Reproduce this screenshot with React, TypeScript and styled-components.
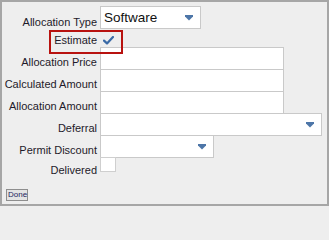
import styled, { createGlobalStyle } from 'styled-components';

const GlobalStyle = createGlobalStyle`
  html, body {
    margin: 0;
    padding: 0;
    background: #eeeeee;
  }
  body {
    font-family: 'Liberation Sans', Arial, sans-serif;
  }
`;

const Panel = styled.div`
  box-sizing: border-box;
  width: 329px;
  height: 206px;
  border: 2px solid #a6a6a6;
  background: #eeeeee;
  padding-top: 4px;
  display: flex;
  flex-direction: column;
`;

const Form = styled.div`
  position: relative;
  display: grid;
  grid-template-columns: 95px 1fr;
  grid-template-rows: 23px 18px 22px 22px 22px 22px 22px 20px;
  column-gap: 3px;
`;

const Label = styled.label`
  align-self: end;
  text-align: right;
  font-size: 11px;
  line-height: 13px;
  color: #1e1a2a;
  white-space: nowrap;
`;

const SelectBox = styled.div<{ $width: number; $big?: boolean }>`
  box-sizing: border-box;
  width: ${p => p.$width}px;
  height: 23px;
  background: #fff;
  border: 1px solid #c9c9c9;
  display: flex;
  align-items: center;
  justify-content: space-between;
  padding: 0 7px 0 3px;
  font-size: ${p => (p.$big ? '13.5px' : '11px')};
  color: #111;
`;

const TextInput = styled.input`
  box-sizing: border-box;
  width: 184px;
  height: 23px;
  margin: 0;
  padding: 0 3px;
  border: 1px solid #c9c9c9;
  background: #fff;
  outline: none;
  font: 11px 'Liberation Sans', Arial, sans-serif;
`;

const CheckCell = styled.div`
  display: flex;
  align-items: center;
  padding-left: 3px;
  padding-top: 5px;
`;

const EmptyCheck = styled.div`
  box-sizing: border-box;
  width: 16px;
  height: 15px;
  background: #fff;
  border: 1px solid #cfcfcf;
`;

const Highlight = styled.div`
  position: absolute;
  left: 47px;
  top: 24px;
  width: 70px;
  height: 20px;
  border: 2px solid #b8120f;
  pointer-events: none;
`;

const DoneButton = styled.button`
  align-self: flex-start;
  margin: 12px 0 0 4px;
  padding: 0 1px;
  height: 12px;
  width: 22px;
  box-sizing: border-box;
  border: 1px solid #8e8e8e;
  background: #e4e4e4;
  color: #1c1c5e;
  font: 8px/10px 'Liberation Sans', Arial, sans-serif;
`;

function Arrow() {
  return (
    <svg width='8' height='6' viewBox='0 0 8 6'>
      <path d='M0 0 H8 V1.6 L4 5.6 L0 1.6 Z' fill='#4d76a8' />
    </svg>
  );
}

function Check() {
  return (
    <svg width='11' height='9' viewBox='0 0 11 9'>
      <path
        d='M1 4.6 L4 7.4 L10 1'
        fill='none'
        stroke='#3a6aa6'
        strokeWidth='2.2'
        strokeLinecap='round'
        strokeLinejoin='round'
      />
    </svg>
  );
}

export default function App() {
  return (
    <>
      <GlobalStyle />
      <Panel>
        <Form>
          <Label>Allocation Type</Label>
          <SelectBox $width={101} $big>
            Software
            <Arrow />
          </SelectBox>

          <Label>Estimate</Label>
          <CheckCell>
            <Check />
          </CheckCell>

          <Label>Allocation Price</Label>
          <TextInput readOnly />

          <Label>Calculated Amount</Label>
          <TextInput readOnly />

          <Label>Allocation Amount</Label>
          <TextInput readOnly />

          <Label>Deferral</Label>
          <SelectBox $width={222}>
            <span />
            <Arrow />
          </SelectBox>

          <Label>Permit Discount</Label>
          <SelectBox $width={114}>
            <span />
            <Arrow />
          </SelectBox>

          <Label>Delivered</Label>
          <div>
            <EmptyCheck />
          </div>

          <Highlight />
        </Form>
        <DoneButton>Done</DoneButton>
      </Panel>
    </>
  );
}
